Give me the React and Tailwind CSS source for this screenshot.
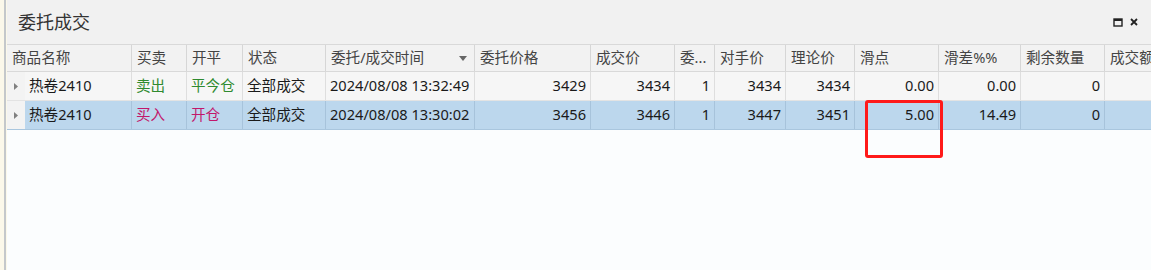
const cols = [
  { key: "name", label: "商品名称", w: "w-[125px]" },
  { key: "side", label: "买卖", w: "w-[55px]" },
  { key: "oc", label: "开平", w: "w-[56px]" },
  { key: "status", label: "状态", w: "w-[83px]" },
  { key: "time", label: "委托/成交时间", w: "w-[149px]", sort: true },
  { key: "price", label: "委托价格", w: "w-[116px]", num: true },
  { key: "deal", label: "成交价", w: "w-[84px]", num: true },
  { key: "qty", label: "委...", w: "w-[40px]", num: true },
  { key: "opp", label: "对手价", w: "w-[71px]", num: true },
  { key: "theo", label: "理论价", w: "w-[69px]", num: true },
  { key: "slip", label: "滑点", w: "w-[84px]", num: true },
  { key: "slipPct", label: "滑差%%", w: "w-[82px]", num: true },
  { key: "left", label: "剩余数量", w: "w-[84px]", num: true },
  { key: "amount", label: "成交额", w: "w-[60px]", num: true },
];

const rows = [
  {
    name: "热卷2410",
    side: "卖出",
    oc: "平今仓",
    status: "全部成交",
    time: "2024/08/08 13:32:49",
    price: "3429",
    deal: "3434",
    qty: "1",
    opp: "3434",
    theo: "3434",
    slip: "0.00",
    slipPct: "0.00",
    left: "0",
    amount: "",
    tone: "text-[#2f8a2f]",
    selected: false,
  },
  {
    name: "热卷2410",
    side: "买入",
    oc: "开仓",
    status: "全部成交",
    time: "2024/08/08 13:30:02",
    price: "3456",
    deal: "3446",
    qty: "1",
    opp: "3447",
    theo: "3451",
    slip: "5.00",
    slipPct: "14.49",
    left: "0",
    amount: "",
    tone: "text-[#c2186b]",
    selected: true,
  },
];

const font = { fontFamily: '"Noto Sans", "Noto Sans CJK SC", sans-serif' };

export default function App() {
  return (
    <div className="flex h-[270px] w-[1151px] overflow-hidden bg-white text-[14.6px]" style={font}>
      <div className="flex w-[7px] shrink-0 bg-[#fbf8ea]">
        <div className="ml-[4px] w-[2px] bg-[#c4c8cb]" />
      </div>
      <div className="relative flex min-w-0 flex-1 flex-col">
        <div className="flex h-[44px] shrink-0 items-center justify-between bg-[#f1f1f1] pl-[11px] pr-[12px]">
          <span className="text-[18px] text-[#333]">委托成交</span>
          <div className="flex items-center gap-[6px] text-[#222]">
            <svg width="10" height="9" viewBox="0 0 10 9">
              <rect x="1" y="1" width="8" height="7" fill="none" stroke="#222" strokeWidth="1.4" />
              <rect x="1" y="1" width="8" height="2" fill="#222" />
            </svg>
            <svg width="10" height="10" viewBox="0 0 10 10">
              <path d="M2 2 L8 8 M8 2 L2 8" stroke="#222" strokeWidth="1.8" />
            </svg>
          </div>
        </div>

        {/* header */}
        <div className="flex h-[28px] shrink-0 border-y border-[#d9d9d9] bg-[#f2f2f2] text-[#444]">
          {cols.map((c) => (
            <div
              key={c.key}
              className={`flex shrink-0 items-center justify-between border-r border-[#d6d6d6] px-[5px] ${c.w}`}
            >
              <span className="truncate">{c.label}</span>
              {c.sort && (
                <svg width="8" height="5" viewBox="0 0 8 5" className="mr-[2px]">
                  <path d="M0 0 H8 L4 5 Z" fill="#666" />
                </svg>
              )}
            </div>
          ))}
        </div>

        {rows.map((r, ri) => (
          <div
            key={ri}
            className={`flex h-[29px] shrink-0 border-b ${
              r.selected ? "border-[#a9c6de] bg-[#bcd7ed]" : "border-[#e3e3e3] bg-[#f6f6f6]"
            }`}
          >
            <div className="flex w-[18px] shrink-0 items-center justify-center bg-[#f3f3f3]">
              <svg width="4" height="7" viewBox="0 0 4 7">
                <path d="M0 0 L4 3.5 L0 7 Z" fill="#808080" />
              </svg>
            </div>
            {cols.map((c, i) => (
              <div
                key={c.key}
                className={`flex shrink-0 items-center border-r px-[4px] ${
                  r.selected ? "border-[#a7c3db]" : "border-[#dedede]"
                } ${i === 0 ? "w-[107px]" : c.w} ${c.num ? "justify-end" : "justify-start"} ${
                  c.key === "side" || c.key === "oc" ? r.tone : "text-[#1a1a1a]"
                }`}
              >
                {r[c.key]}
              </div>
            ))}
          </div>
        ))}

        <div className="flex-1 bg-[#fbfdfe]" />

        <div className="absolute left-[858px] top-[100px] h-[58px] w-[78px] rounded-[3px] border-[3px] border-[#ff1a1a]" />
      </div>
    </div>
  );
}
